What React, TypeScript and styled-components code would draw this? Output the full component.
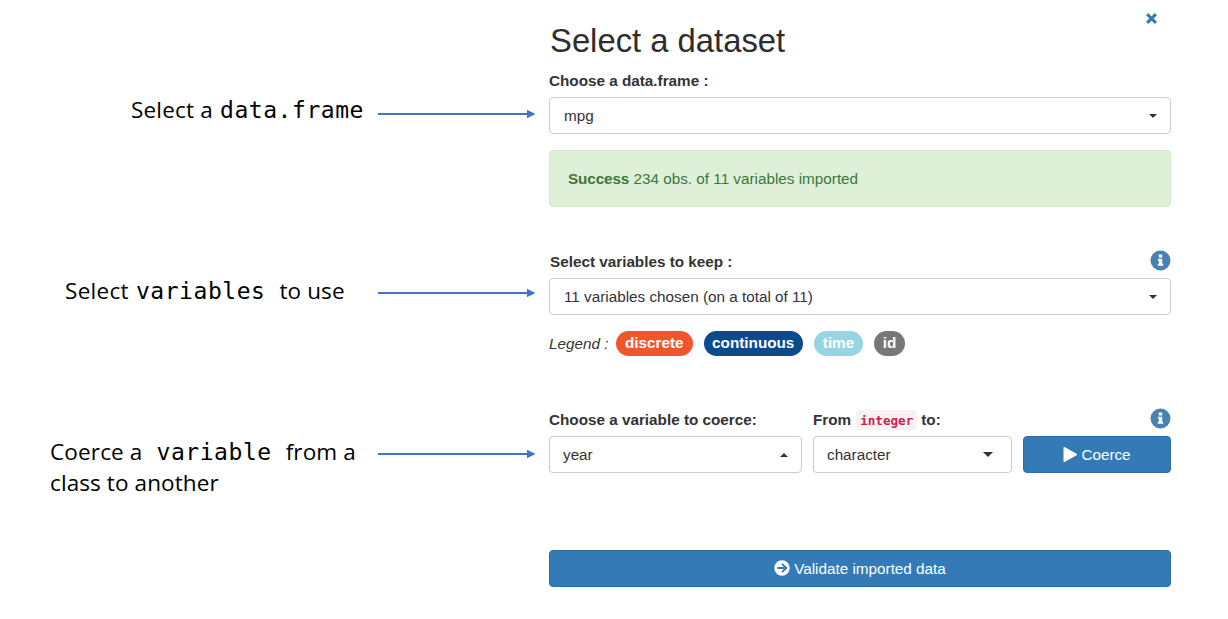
import React from 'react';
import styled, { createGlobalStyle } from 'styled-components';

const GlobalStyle = createGlobalStyle`
  * { box-sizing: border-box; }
  body { margin: 0; background: #fff; }
`;

const Page = styled.div`
  display: flex;
  width: 1228px;
  height: 619px;
  overflow: hidden;
  background: #fff;
  font-family: 'Liberation Sans', Arial, sans-serif;
  font-size: 15.27px;
  color: #333;
`;

const Notes = styled.aside`
  display: flex;
  flex-direction: column;
  width: 549px;
  flex: none;
`;

const Note = styled.div<{ $top: number; $indent: number }>`
  display: flex;
  align-items: flex-start;
  margin-top: ${(p) => p.$top}px;
  padding-left: ${(p) => p.$indent}px;
  height: 62px;
`;

const NoteText = styled.div`
  flex: 1;
  font-family: 'Open Sans', sans-serif;
  color: #000;
`;

const Line = styled.div`
  display: flex;
  align-items: baseline;
  height: 31px;
  line-height: 31px;
  white-space: pre;
`;

const Word = styled.span<{ $gap?: number; $track?: number }>`
  margin-left: ${(p) => p.$gap ?? 0}px;
  font-size: 22.5px;
  letter-spacing: ${(p) => p.$track ?? 0.2}px;
`;

const Mono = styled.span<{ $gap?: number }>`
  margin-left: ${(p) => p.$gap ?? 0}px;
  font-family: 'DejaVu Sans Mono', monospace;
  font-size: 23px;
  letter-spacing: 0.55px;
`;

const ArrowSvg = styled.svg<{ $drop: number }>`
  display: block;
  flex: none;
  width: 158px;
  height: 10px;
  margin: ${(p) => p.$drop}px 13px 0 0;
`;

const Panel = styled.main`
  display: flex;
  flex-direction: column;
  width: 622px;
  flex: none;
`;

const Header = styled.header`
  display: flex;
  justify-content: space-between;
  height: 70px;
  padding-top: 12px;
`;

const Title = styled.h1`
  margin: 9px 0 0 1px;
  font-size: 32.8px;
  font-weight: 400;
  line-height: 40px;
  color: #2d2d2d;
  white-space: nowrap;
`;

const Close = styled.button`
  display: block;
  width: 13px;
  height: 13px;
  margin-right: 13px;
  padding: 0;
  border: 0;
  background: none;
`;

const LabelRow = styled.div<{ $top?: number }>`
  display: flex;
  align-items: flex-end;
  justify-content: space-between;
  height: 22px;
  margin: ${(p) => p.$top ?? 0}px 0 5px;
`;

const Label = styled.label<{ $width?: number; $inset?: number }>`
  display: flex;
  align-items: center;
  width: ${(p) => (p.$width ? `${p.$width}px` : 'auto')};
  padding-left: ${(p) => p.$inset ?? 0}px;
  font-weight: 700;
  line-height: 22px;
  white-space: pre;
`;

const Code = styled.code`
  height: 20px;
  margin: 0 4px 0 5px;
  padding: 0 4px;
  border-radius: 4px;
  background: #f9f2f4;
  color: #c7254e;
  font-family: 'DejaVu Sans Mono', monospace;
  font-size: 12.6px;
  font-weight: 700;
  line-height: 21px;
`;

const InfoIcon = styled.svg`
  display: block;
  width: 21px;
  height: 21px;
  margin-bottom: 2px;
`;

const Select = styled.div<{ $width?: number; $left?: number; $right?: number }>`
  display: flex;
  align-items: center;
  justify-content: space-between;
  width: ${(p) => (p.$width ? `${p.$width}px` : '100%')};
  height: 37px;
  flex: none;
  padding: 0 ${(p) => p.$right ?? 13}px 0 ${(p) => p.$left ?? 13}px;
  border: 1px solid #ccc;
  border-radius: 4px;
  background: #fff;
  white-space: nowrap;
`;

const Caret = styled.span<{ $up?: boolean; $size?: number }>`
  width: 0;
  height: 0;
  border: solid transparent;
  border-width: 0 ${(p) => p.$size ?? 4}px;
  ${(p) => (p.$up ? 'border-bottom' : 'border-top')}: ${(p) => p.$size ?? 4}px solid #333;
`;

const Alert = styled.div`
  height: 57px;
  margin-top: 16px;
  padding-left: 18px;
  border: 1px solid #d0e9c6;
  border-radius: 4px;
  background: #dff0d8;
  color: #3c763d;
  line-height: 56px;
`;

const AlertStrong = styled.strong`
  letter-spacing: -0.1px;
`;

const Legend = styled.div`
  display: flex;
  align-items: center;
  height: 25px;
  margin-top: 16px;
`;

const LegendTitle = styled.em`
  width: 67px;
  line-height: 23px;
  white-space: nowrap;
`;

const Badge = styled.span<{ $color: string; $width: number }>`
  width: ${(p) => p.$width}px;
  height: 25px;
  margin-right: 11px;
  border-radius: 13px;
  background: ${(p) => p.$color};
  color: #fff;
  font-weight: 700;
  line-height: 24px;
  text-align: center;
`;

const Fields = styled.div`
  display: flex;
  gap: 11px;
`;

const Button = styled.button<{ $width?: number; $top?: number; $gap: number }>`
  display: flex;
  align-items: center;
  justify-content: center;
  gap: ${(p) => p.$gap}px;
  width: ${(p) => (p.$width ? `${p.$width}px` : '100%')};
  height: 37px;
  flex: none;
  margin: ${(p) => p.$top ?? 0}px 0 0;
  padding: 0;
  border: 1px solid #2e6da4;
  border-radius: 4px;
  background: #337ab7;
  color: #fff;
  font: inherit;
`;

const Arrow = ({ drop }: { drop: number }) => (
  <ArrowSvg $drop={drop} viewBox="0 0 158 10">
    <path d="M0 5H150" stroke="#4472c4" strokeWidth="2" />
    <path d="M149 .8L157.5 5L149 9.2Z" fill="#4472c4" />
  </ArrowSvg>
);

const Info = () => (
  <InfoIcon viewBox="0 0 21 21">
    <circle cx="10.5" cy="10.5" r="10" fill="#4682b4" />
    <path d="M8.8 4.5h3.4v3H8.8zM7.9 8.7h4.3v5h1v2.1H7.9v-2.1h1v-2.9h-1z" fill="#fff" />
  </InfoIcon>
);

export default function App() {
  return (
    <Page>
      <GlobalStyle />
      <Notes>
        <Note $top={94} $indent={131}>
          <NoteText>
            <Line><Word>Select a</Word><Mono $gap={7}>data.frame</Mono></Line>
          </NoteText>
          <Arrow drop={15} />
        </Note>
        <Note $top={119} $indent={65}>
          <NoteText>
            <Line><Word $track={0.3}>Select</Word><Mono $gap={7}>variables</Mono><Word $gap={14} $track={0.1}>to use</Word></Line>
          </NoteText>
          <Arrow drop={13} />
        </Note>
        <Note $top={99} $indent={50}>
          <NoteText>
            <Line><Word $track={0.15}>Coerce a</Word><Mono $gap={14}>variable</Mono><Word $gap={14} $track={0.1}>from a</Word></Line>
            <Line><Word $track={0.1}>class to another</Word></Line>
          </NoteText>
          <Arrow drop={13} />
        </Note>
      </Notes>
      <Panel>
        <Header>
          <Title>Select a dataset</Title>
          <Close aria-label="Close">
            <svg width="13" height="13" viewBox="0 0 13 13">
              <path d="M2.1 2.1L10.9 10.9M10.9 2.1L2.1 10.9" stroke="#337ab7" strokeWidth="2.9" />
            </svg>
          </Close>
        </Header>
        <LabelRow><Label>Choose a data.frame :</Label></LabelRow>
        <Select $left={14}><span>mpg</span><Caret /></Select>
        <Alert><AlertStrong>Success</AlertStrong> 234 obs. of 11 variables imported</Alert>
        <LabelRow $top={44}><Label $inset={1}>Select variables to keep :</Label><Info /></LabelRow>
        <Select $left={14}><span>11 variables chosen (on a total of 11)</span><Caret /></Select>
        <Legend>
          <LegendTitle>Legend :</LegendTitle>
          <Badge $color="#f0552b" $width={76.5}>discrete</Badge>
          <Badge $color="#0b4a8b" $width={99.5}>continuous</Badge>
          <Badge $color="#98d5e2" $width={49}>time</Badge>
          <Badge $color="#777" $width={31}>id</Badge>
        </Legend>
        <LabelRow $top={53}>
          <Fields>
            <Label $width={253}>Choose a variable to coerce:</Label>
            <Label>From<Code>integer</Code>to:</Label>
          </Fields>
          <Info />
        </LabelRow>
        <Fields>
          <Select $width={253}><span>year</span><Caret $up /></Select>
          <Select $width={199} $right={18}><span>character</span><Caret $size={5} /></Select>
          <Button $width={148} $gap={3}>
            <svg width="15" height="17" viewBox="0 0 15 17"><path d="M1 1.2L14 8.5L1 15.8Z" fill="#fff" stroke="#fff" strokeLinejoin="round" /></svg>
            <span>Coerce</span>
          </Button>
        </Fields>
        <Button $top={76.5} $gap={4}>
          <svg width="16" height="16" viewBox="0 0 16 16">
            <circle cx="8" cy="8" r="7.7" fill="#fff" />
            <path d="M3.4 8H12M8 3.8L12.2 8L8 12.2" fill="none" stroke="#337ab7" strokeWidth="1.9" />
          </svg>
          <span>Validate imported data</span>
        </Button>
      </Panel>
    </Page>
  );
}
